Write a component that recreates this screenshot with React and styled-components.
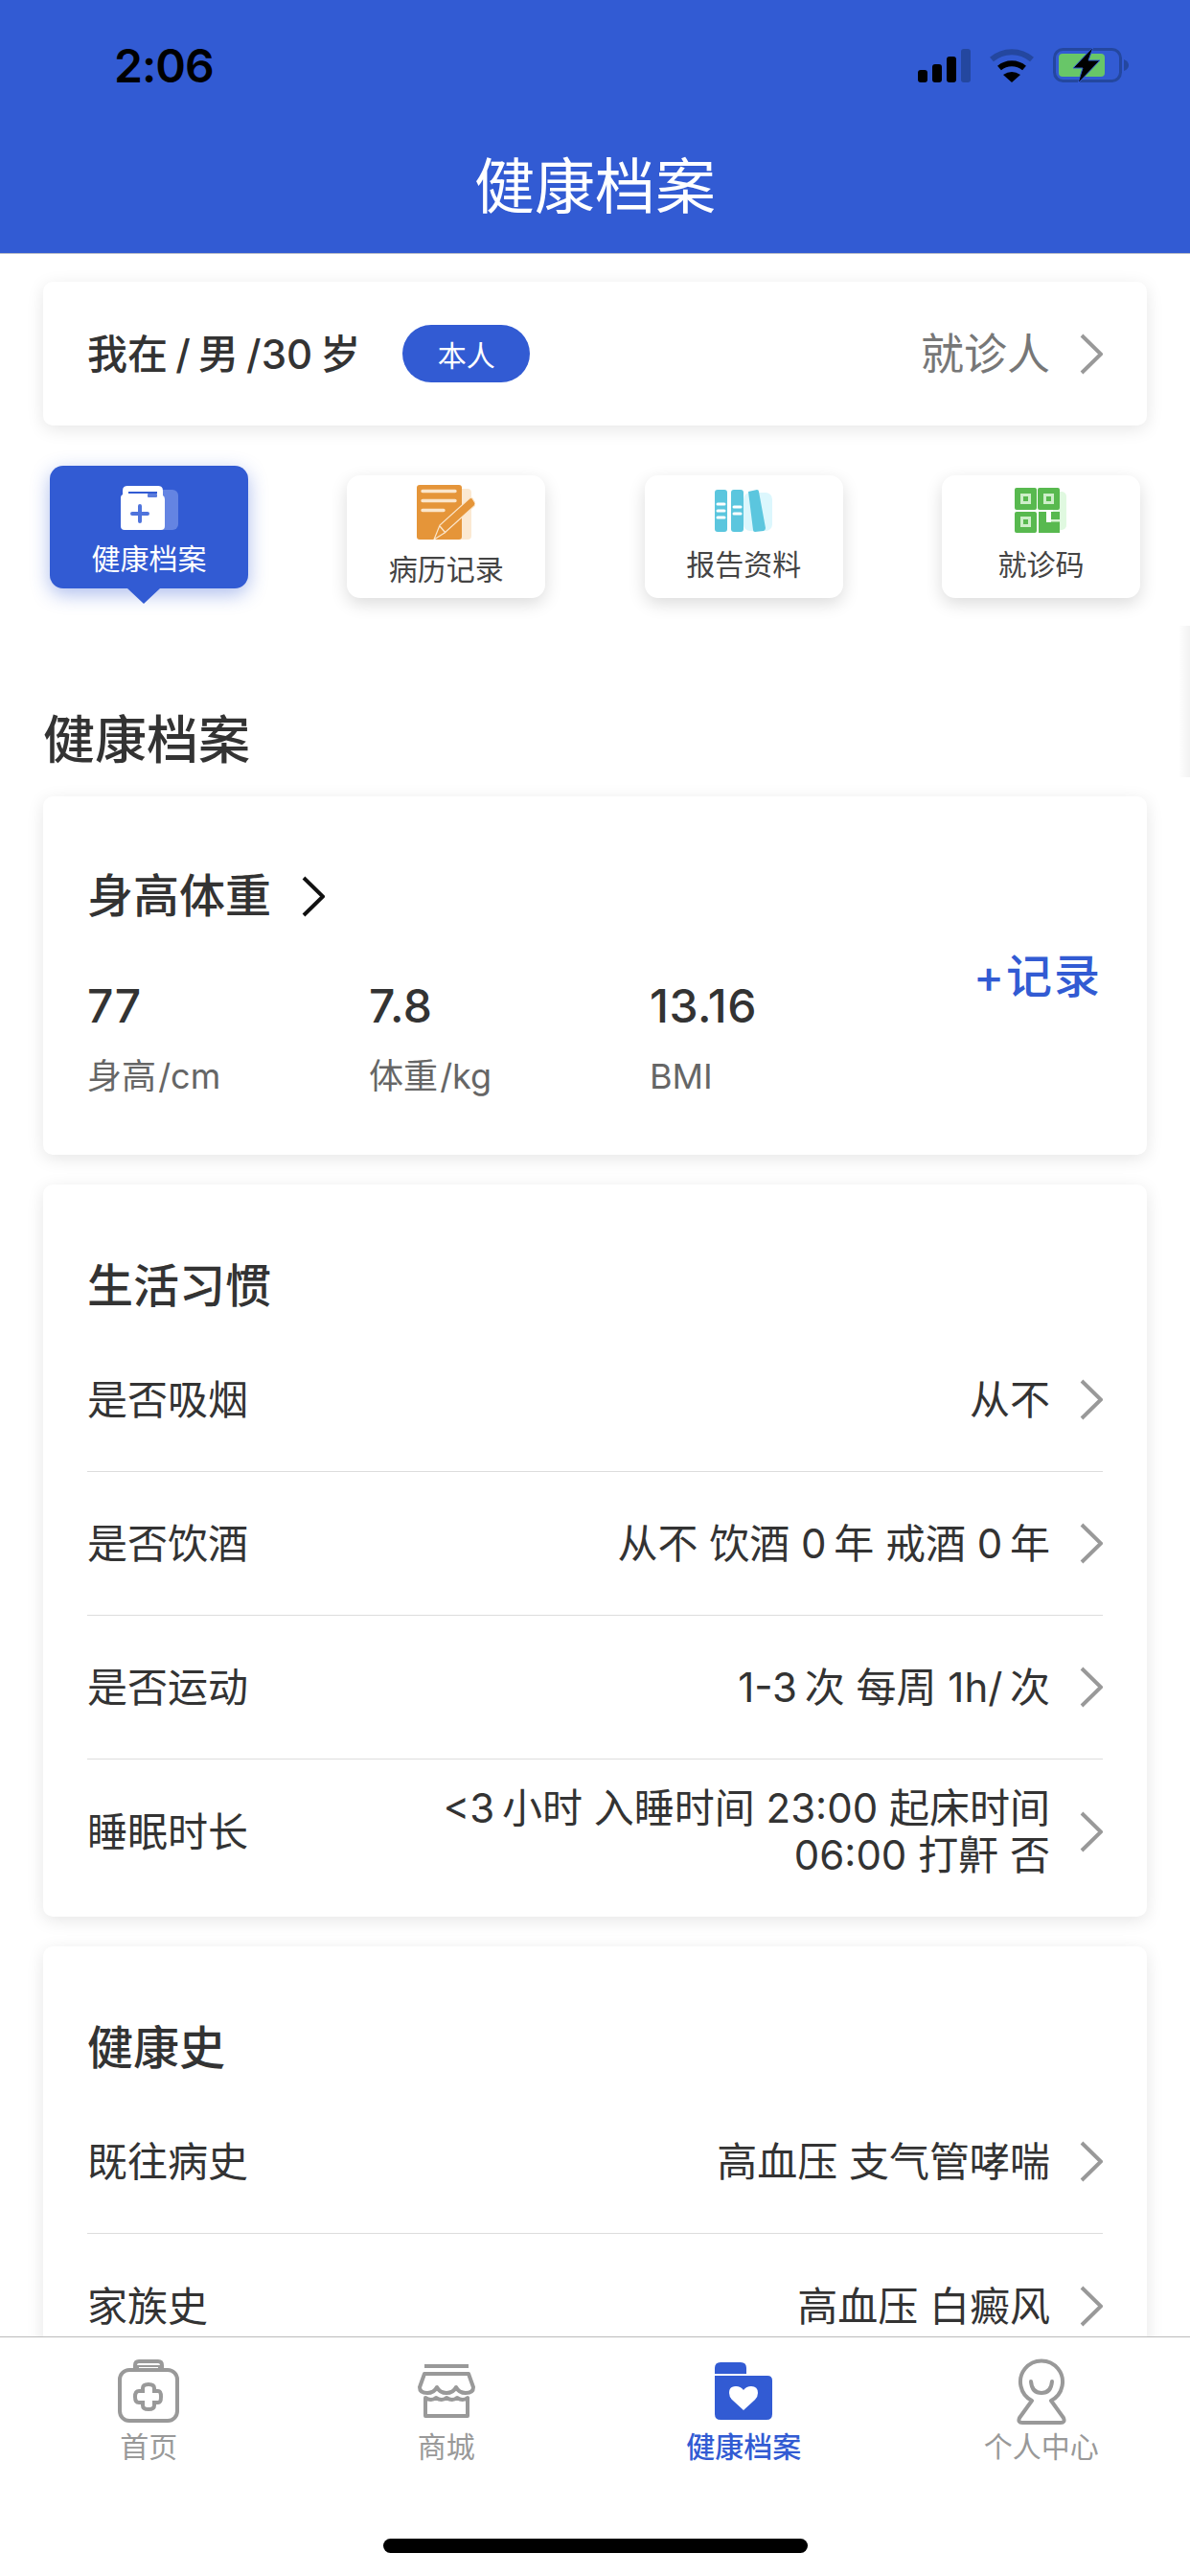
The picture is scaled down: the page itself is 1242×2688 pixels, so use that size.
import React from "react";
import styled, { createGlobalStyle } from "styled-components";

const BLUE = "#325bd3";

const GlobalStyle = createGlobalStyle`
  html, body {
    margin: 0;
    padding: 0;
    background: #ffffff;
  }
  * {
    box-sizing: border-box;
  }
`;

const Page = styled.div`
  position: relative;
  width: 1242px;
  height: 2688px;
  display: flex;
  flex-direction: column;
  overflow: hidden;
  background: #ffffff;
  font-family: Inter, "Noto Sans CJK SC", sans-serif;
  color: #333333;
`;

const Header = styled.header`
  height: 265px;
  flex: none;
  background: ${BLUE};
  border-bottom: 1px solid #b9bdc8;
`;

const StatusBar = styled.div`
  height: 60px;
  margin-top: 38px;
  padding: 0 64px 0 119px;
  display: flex;
  align-items: center;
  justify-content: space-between;
`;

const Time = styled.div`
  font-size: 48px;
  font-weight: 600;
  color: #000000;
  letter-spacing: -1px;
`;

const StatusIcons = styled.div`
  display: flex;
  align-items: center;
  gap: 19px;
`;

const HeaderTitle = styled.h1`
  margin: 56px 0 0;
  font-size: 63px;
  line-height: 80px;
  font-weight: 400;
  color: #ffffff;
  text-align: center;
`;

const Content = styled.main`
  flex: 1;
  min-height: 0;
  overflow: hidden;
  padding: 29px 45px 0;
`;

const Card = styled.section`
  background: #ffffff;
  border-radius: 10px;
  box-shadow: 0 4px 18px rgba(0, 0, 0, 0.1);
  margin-bottom: 31px;
`;

const PatientCard = styled(Card)`
  height: 150px;
  padding: 0 46px;
  display: flex;
  align-items: center;
  margin-bottom: 0;
`;

const PatientName = styled.div`
  font-size: 42px;
  line-height: 49px;
  font-weight: 500;
  word-spacing: -3px;
  color: #333333;
`;

const Badge = styled.div`
  width: 133px;
  height: 60px;
  margin-left: 44px;
  border-radius: 30px;
  background: ${BLUE};
  color: #ffffff;
  font-size: 30px;
  display: flex;
  align-items: center;
  justify-content: center;
`;

const PatientSwitch = styled.div`
  margin-left: auto;
  font-size: 45px;
  line-height: 49px;
  color: #777777;
  display: flex;
  align-items: center;
  gap: 31px;
`;

const Tabs = styled.div`
  margin-top: 41px;
  height: 139px;
  padding: 0 7px;
  display: flex;
  justify-content: space-between;
  align-items: flex-end;
`;

const Tab = styled.div`
  position: relative;
  width: 207px;
  height: 128px;
  border-radius: 14px;
  padding-top: ${(p) => p.$pad}px;
  display: flex;
  flex-direction: column;
  align-items: center;
  gap: ${(p) => p.$gap}px;
  background: ${(p) => (p.$active ? BLUE : "#ffffff")};
  color: ${(p) => (p.$active ? "#ffffff" : "#444444")};
  box-shadow: ${(p) =>
    p.$active
      ? "0 6px 20px rgba(50, 91, 211, 0.4)"
      : "0 6px 18px rgba(0, 0, 0, 0.14)"};
  margin-bottom: ${(p) => (p.$active ? 10 : 0)}px;

  ${(p) =>
    p.$active &&
    `
    &::after {
      content: "";
      position: absolute;
      left: 81px;
      bottom: -16px;
      border-left: 17px solid transparent;
      border-right: 17px solid transparent;
      border-top: 16px solid ${BLUE};
    }
  `}
`;

const TabLabel = styled.div`
  font-size: 30px;
  line-height: 40px;
`;

// shadow of the next tab peeking in from off screen
const EdgeShadow = styled.div`
  position: absolute;
  right: 0;
  top: 653px;
  width: 12px;
  height: 158px;
  background: linear-gradient(to right, rgba(0, 0, 0, 0), rgba(0, 0, 0, 0.05));
`;

const SectionTitle = styled.h2`
  margin: 114px 0 23px;
  font-size: 54px;
  line-height: 70px;
  font-weight: 500;
  color: #333333;
`;

const MeasureCard = styled(Card)`
  position: relative;
  height: 374px;
  padding: 74px 46px 0;
`;

const CardTitle = styled.h3`
  margin: 0;
  font-size: 48px;
  line-height: 60px;
  font-weight: 500;
  color: #333333;
  display: flex;
  align-items: center;
  gap: 32px;
`;

const Measures = styled.div`
  margin-top: 55px;
  display: grid;
  grid-template-columns: 294px 293px 1fr;
`;

const MeasureValue = styled.div`
  font-size: 48px;
  line-height: 60px;
  font-weight: 500;
  letter-spacing: 0.5px;
  color: #333333;
`;

const MeasureLabel = styled.div`
  margin-top: 20px;
  font-size: 36px;
  line-height: 46px;
  word-spacing: -8px;
  color: #666666;
`;

const RecordButton = styled.div`
  position: absolute;
  right: 47px;
  top: 158px;
  font-size: 48px;
  line-height: 60px;
  font-weight: 500;
  letter-spacing: 2px;
  color: ${BLUE};
`;

const ListCard = styled(Card)`
  padding: 76px 46px 14px;
`;

const Rows = styled.div`
  margin-top: 14px;
`;

const Row = styled.div`
  height: 150px;
  display: flex;
  align-items: center;
  justify-content: space-between;
  border-bottom: 1px solid #dddddd;
  font-size: 42px;
  line-height: 49px;
  color: #333333;

  &:last-child {
    border-bottom: none;
  }
`;

const RowValue = styled.div`
  display: flex;
  align-items: center;
  gap: 31px;
`;

const ValueText = styled.div`
  max-width: 650px;
  text-align: right;
`;

const TabBar = styled.nav`
  flex: none;
  background: #ffffff;
  border-top: 1px solid #bbbbbb;
  padding-top: 20px;
  display: flex;
  flex-direction: column;
  align-items: center;
`;

const BarItems = styled.div`
  width: 100%;
  display: grid;
  grid-template-columns: repeat(4, 1fr);
`;

const BarItem = styled.div`
  display: flex;
  flex-direction: column;
  align-items: center;
  color: ${(p) => (p.$active ? BLUE : "#999999")};
`;

const BarIcon = styled.div`
  height: 72px;
  display: flex;
  align-items: center;
`;

const BarLabel = styled.div`
  margin-top: 2px;
  font-size: 30px;
  line-height: 40px;
  font-weight: ${(p) => (p.$active ? 500 : 400)};
`;

const HomeIndicator = styled.div`
  width: 443px;
  height: 15px;
  margin: 76px 0 24px;
  border-radius: 8px;
  background: #000000;
`;

const Chevron = ({ color = "#999999" }) => (
  <svg width="24" height="43" viewBox="0 0 24 43" fill="none">
    <path d="M2 2 L22 21.5 L2 41" stroke={color} strokeWidth="4" />
  </svg>
);

const SignalIcon = () => (
  <svg width="55" height="35" viewBox="0 0 55 35">
    <rect x="0" y="22" width="10" height="13" rx="3" fill="#000" />
    <rect x="15" y="16" width="10" height="19" rx="3" fill="#000" />
    <rect x="30" y="8" width="10" height="27" rx="3" fill="#000" />
    <rect x="45" y="0" width="10" height="35" rx="3" fill="#24479f" />
  </svg>
);

const WifiIcon = () => (
  <svg width="48" height="35" viewBox="0 0 48 35" fill="none">
    <path d="M3 11 A 32 32 0 0 1 45 11" stroke="#24479f" strokeWidth="6" />
    <path d="M11 20 A 20 20 0 0 1 37 20" stroke="#000" strokeWidth="6" />
    <path d="M24 35 L15 27 Q24 21 33 27 Z" fill="#000" />
  </svg>
);

const BatteryIcon = () => (
  <svg width="79" height="38" viewBox="0 0 79 38" fill="none">
    <rect x="1.5" y="2.5" width="69" height="33" rx="9" stroke="#24479f" strokeWidth="3" />
    <path d="M74 13 Q79 15 79 19 Q79 23 74 25 Z" fill="#24479f" />
    <rect x="6" y="7" width="48" height="24" rx="4" fill="#68c668" />
    <path
      d="M42 0 L21 22 H31 L26 38 L49 14 H37 Z"
      fill="#000"
      stroke={BLUE}
      strokeWidth="1"
    />
  </svg>
);

const ArchiveIcon = () => (
  <svg width="60" height="46" viewBox="0 0 60 46">
    <rect x="30" y="4" width="30" height="42" rx="6" fill="#6484e2" />
    <path
      d="M7 0 H39 Q44 0 44 5 V10 Q46 11 46 14 V42 Q46 46 42 46 H4 Q0 46 0 42 V12 Q0 10 2 9 V5 Q2 0 7 0 Z"
      fill="#ffffff"
    />
    <path d="M8 7 H38" stroke={BLUE} strokeWidth="2" />
    <rect x="28" y="8" width="10" height="4" rx="1" fill={BLUE} opacity="0.8" />
    <path d="M20 21 V37 M12 29 H28" stroke="#4f74dc" strokeWidth="4" strokeLinecap="round" />
  </svg>
);

const RecordIcon = () => (
  <svg width="61" height="57" viewBox="0 0 61 57" fill="none">
    <rect x="30" y="4" width="27" height="53" rx="4" fill="#fbe9d2" />
    <rect x="0" y="0" width="47" height="57" rx="3" fill="#e59539" />
    <path d="M6 6.5 H40 M6 16.5 H40 M6 26.5 H28" stroke="#fbe6cb" strokeWidth="3.4" strokeLinecap="round" />
    <path
      d="M18 57 L24 42 L55 14 Q57 13 58 14 L61 19 Q61 21 60 22 L29 50 Z"
      fill="#e59539"
      stroke="#fbe6cb"
      strokeWidth="1.2"
    />
    <path d="M24 43 L30 50" stroke="#fbe6cb" strokeWidth="1.4" />
  </svg>
);

const ReportIcon = () => (
  <svg width="60" height="44" viewBox="0 0 60 44">
    <rect x="30" y="3" width="30" height="40" rx="7" fill="#dcf7fd" />
    <rect x="0" y="0" width="13" height="44" rx="3" fill="#5bc6de" />
    <rect x="17" y="0" width="13" height="44" rx="3" fill="#5bc6de" />
    <path d="M35 2 L44 0 Q46 0 46 2 L53 40 Q53 42 51 43 L42 44 Q40 44 40 42 Z" fill="#5bc6de" />
    <path d="M3 15 H10 M3 22 H10 M3 29 H10 M20 18 H27 M20 25 H27" stroke="#ffffff" strokeWidth="3" strokeLinecap="round" />
  </svg>
);

const CodeIcon = () => (
  <svg width="54" height="47" viewBox="0 0 54 47">
    <rect x="40" y="4" width="14" height="40" rx="5" fill="#e0f9e0" />
    <rect x="0" y="0" width="23" height="23" rx="2" fill="#58b94f" />
    <rect x="24" y="0" width="23" height="23" rx="2" fill="#58b94f" />
    <rect x="0" y="25" width="23" height="22" rx="2" fill="#58b94f" />
    <path d="M25 25 H33 V36 H38 V25 H47 V47 H25 Z" fill="#58b94f" />
    <rect x="38" y="33" width="9" height="2.5" fill="#d6f3d3" />
    <rect x="6" y="6" width="11" height="11" fill="#cdeec9" />
    <rect x="9" y="9" width="5" height="5" fill="#58b94f" />
    <rect x="30" y="6" width="11" height="11" fill="#cdeec9" />
    <rect x="33" y="9" width="5" height="5" fill="#58b94f" />
    <rect x="6" y="30" width="11" height="11" fill="#cdeec9" />
    <rect x="9" y="33" width="5" height="5" fill="#58b94f" />
  </svg>
);

const HomeIcon = () => (
  <svg width="64" height="66" viewBox="0 0 64 66" fill="none" stroke="#999999" strokeWidth="4">
    <rect x="2" y="11" width="60" height="53" rx="10" />
    <path d="M18 11 V6 Q18 2 22 2 H42 Q46 2 46 6 V11" />
    <path d="M21 10 V7 H43 V10" strokeWidth="2" />
    <path d="M26 30 Q26 26 32 26 Q38 26 38 30 V33 H42 Q45 33 45 39 Q45 45 42 45 H38 V48 Q38 52 32 52 Q26 52 26 48 V45 H22 Q18 45 18 39 Q18 33 22 33 H26 Z" />
  </svg>
);

const StoreIcon = () => (
  <svg width="60" height="56" viewBox="0 0 60 56" fill="none" stroke="#999999" strokeWidth="4">
    <path d="M7 2 H53" />
    <path d="M7 10 H53 L58 24 Q58 30 50 30 Q43 30 40 24 Q37 30 30 30 Q23 30 20 24 Q17 30 10 30 Q2 30 2 24 Z" strokeLinejoin="round" />
    <path d="M8 35 Q14 39 19 35 Q25 39 30 35 Q36 39 41 35 Q47 39 52 35 V54 H8 Z" strokeLinejoin="round" />
  </svg>
);

const FolderIcon = () => (
  <svg width="60" height="60" viewBox="0 0 60 60">
    <path d="M0 12 V6 Q0 0 6 0 H27 Q33 0 33 6 V12 Z" fill={BLUE} />
    <path d="M0 14 H55 Q60 14 60 19 V54 Q60 60 54 60 H6 Q0 60 0 54 Z" fill={BLUE} />
    <path d="M30 50 L18 39 Q15 36 15 32 Q15 25 22 25 Q27 25 30 29 Q33 25 38 25 Q45 25 45 32 Q45 36 42 39 Z" fill="#ffffff" />
  </svg>
);

const PersonIcon = () => (
  <svg width="52" height="69" viewBox="0 0 52 69" fill="none" stroke="#999999" strokeWidth="4">
    <path d="M16 44 A 22 22 0 1 1 36 44 L49 62 Q51 67 46 67 H6 Q1 67 3 62 Z" strokeLinejoin="round" />
    <path d="M15 24 Q16 36 26 36 Q36 36 37 24" strokeLinecap="round" />
  </svg>
);

const sections = [
  {
    title: "生活习惯",
    rows: [
      ["是否吸烟", "从不"],
      ["是否饮酒", "从不 饮酒 0\u2009年 戒酒 0\u2009年"],
      ["是否运动", "1-3\u2009次 每周 1h/\u2009次"],
      ["睡眠时长", "<3\u2009小时 入睡时间 23:00 起床时间 06:00 打鼾 否"],
    ],
  },
  {
    title: "健康史",
    rows: [
      ["既往病史", "高血压 支气管哮喘"],
      ["家族史", "高血压 白癜风"],
    ],
  },
];

const tabs = [
  { label: "健康档案", Icon: ArchiveIcon, pad: 21, gap: 10, active: true },
  { label: "病历记录", Icon: RecordIcon, pad: 10, gap: 11 },
  { label: "报告资料", Icon: ReportIcon, pad: 15, gap: 14 },
  { label: "就诊码", Icon: CodeIcon, pad: 13, gap: 13 },
];

const barItems = [
  { label: "首页", Icon: HomeIcon },
  { label: "商城", Icon: StoreIcon },
  { label: "健康档案", Icon: FolderIcon, active: true },
  { label: "个人中心", Icon: PersonIcon },
];

const measures = [
  ["77", "身高 /cm"],
  ["7.8", "体重 /kg"],
  ["13.16", "BMI"],
];

const App = () => (
  <Page>
    <GlobalStyle />
    <Header>
      <StatusBar>
        <Time>2:06</Time>
        <StatusIcons>
          <SignalIcon />
          <WifiIcon />
          <BatteryIcon />
        </StatusIcons>
      </StatusBar>
      <HeaderTitle>健康档案</HeaderTitle>
    </Header>

    <Content>
      <PatientCard>
        <PatientName>我在 / 男 /30 岁</PatientName>
        <Badge>本人</Badge>
        <PatientSwitch>
          就诊人
          <Chevron />
        </PatientSwitch>
      </PatientCard>

      <Tabs>
        {tabs.map(({ label, Icon, pad, gap, active }) => (
          <Tab key={label} $pad={pad} $gap={gap} $active={active}>
            <Icon />
            <TabLabel>{label}</TabLabel>
          </Tab>
        ))}
      </Tabs>
      <EdgeShadow />

      <SectionTitle>健康档案</SectionTitle>

      <MeasureCard>
        <CardTitle>
          身高体重
          <Chevron color="#111111" />
        </CardTitle>
        <Measures>
          {measures.map(([value, label]) => (
            <div key={label}>
              <MeasureValue>{value}</MeasureValue>
              <MeasureLabel>{label}</MeasureLabel>
            </div>
          ))}
        </Measures>
        <RecordButton>+记录</RecordButton>
      </MeasureCard>

      {sections.map((section) => (
        <ListCard key={section.title}>
          <CardTitle>{section.title}</CardTitle>
          <Rows>
            {section.rows.map(([label, value]) => (
              <Row key={label}>
                {label}
                <RowValue>
                  <ValueText>{value}</ValueText>
                  <Chevron />
                </RowValue>
              </Row>
            ))}
          </Rows>
        </ListCard>
      ))}
    </Content>

    <TabBar>
      <BarItems>
        {barItems.map(({ label, Icon, active }) => (
          <BarItem key={label} $active={active}>
            <BarIcon>
              <Icon />
            </BarIcon>
            <BarLabel $active={active}>{label}</BarLabel>
          </BarItem>
        ))}
      </BarItems>
      <HomeIndicator />
    </TabBar>
  </Page>
);

export default App;
